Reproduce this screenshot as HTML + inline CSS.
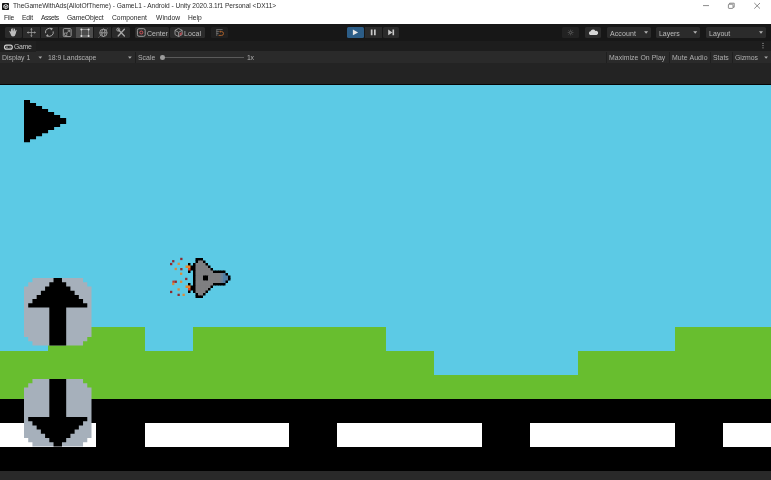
<!DOCTYPE html>
<html><head><meta charset="utf-8">
<style>
html,body{margin:0;padding:0;}
body{width:771px;height:480px;overflow:hidden;background:#000;position:relative;font-family:"Liberation Sans",sans-serif;}
.a{position:absolute;}
.t{position:absolute;white-space:nowrap;line-height:1;will-change:transform;}
.btn{position:absolute;background:#2d2d2d;border-radius:1.5px;}
svg{position:absolute;overflow:visible;}
</style></head><body>

<div class="a" style="left:0;top:0;width:771px;height:24px;background:#fff"></div>
<div class="a" style="left:0;top:24px;width:771px;height:17px;background:#171717"></div>
<div class="a" style="left:0;top:40.8px;width:771px;height:10.7px;background:#1d1d1d"></div>
<div class="a" style="left:0;top:51.4px;width:771px;height:12px;background:#2a2a2a"></div>
<div class="a" style="left:0;top:63.2px;width:771px;height:21.5px;background:#232323"></div>
<div class="a" style="left:0;top:83.7px;width:771px;height:1.2px;background:#050505"></div>
<div class="a" style="left:0;top:84.8px;width:771px;height:320px;background:#5ccae5"></div>
<div class="a" style="left:0.00px;top:350.68px;width:48.49px;height:48.69px;background:#68be2f"></div>
<div class="a" style="left:48.19px;top:326.59px;width:96.67px;height:72.78px;background:#68be2f"></div>
<div class="a" style="left:144.56px;top:350.68px;width:48.49px;height:48.69px;background:#68be2f"></div>
<div class="a" style="left:192.75px;top:326.59px;width:193.05px;height:72.78px;background:#68be2f"></div>
<div class="a" style="left:385.50px;top:350.68px;width:48.49px;height:48.69px;background:#68be2f"></div>
<div class="a" style="left:433.69px;top:374.77px;width:144.86px;height:24.59px;background:#68be2f"></div>
<div class="a" style="left:578.25px;top:350.68px;width:96.67px;height:48.69px;background:#68be2f"></div>
<div class="a" style="left:674.62px;top:326.59px;width:96.67px;height:72.78px;background:#68be2f"></div>
<div class="a" style="left:0;top:398.87px;width:771px;height:72.28px;background:#000"></div>
<div class="a" style="left:-48.19px;top:422.96px;width:144.56px;height:24.09px;background:#fff"></div>
<div class="a" style="left:144.56px;top:422.96px;width:144.56px;height:24.09px;background:#fff"></div>
<div class="a" style="left:337.31px;top:422.96px;width:144.56px;height:24.09px;background:#fff"></div>
<div class="a" style="left:530.06px;top:422.96px;width:144.56px;height:24.09px;background:#fff"></div>
<div class="a" style="left:722.81px;top:422.96px;width:144.56px;height:24.09px;background:#fff"></div>
<div class="a" style="left:0;top:470.9px;width:771px;height:9.3px;background:#292929"></div>
<svg style="left:24.09px;top:100px" width="50" height="50"><polygon fill="#000" points="0.00,0.00 6.02,0.00 6.02,3.01 12.05,3.01 12.05,6.02 18.07,6.02 18.07,9.04 24.09,9.04 24.09,12.05 30.12,12.05 30.12,15.06 36.14,15.06 36.14,18.07 42.16,18.07 42.16,24.09 36.14,24.09 36.14,27.11 30.12,27.11 30.12,30.12 24.09,30.12 24.09,33.13 18.07,33.13 18.07,36.14 12.05,36.14 12.05,39.15 6.02,39.15 6.02,42.16 0.00,42.16"/></svg>
<svg style="left:24.10px;top:277.90px" width="68" height="68"><polygon fill="#a6b0bb" points="8.44,0.00 59.06,0.00 59.06,4.22 63.28,4.22 63.28,8.44 67.50,8.44 67.50,59.06 63.28,59.06 63.28,63.28 59.06,63.28 59.06,67.50 8.44,67.50 8.44,63.28 4.22,63.28 4.22,59.06 0.00,59.06 0.00,8.44 4.22,8.44 4.22,4.22 8.44,4.22"/><polygon fill="#000" points="29.53,0.00 37.97,0.00 37.97,4.22 42.19,4.22 42.19,8.44 46.41,8.44 46.41,12.66 50.62,12.66 50.62,16.88 54.84,16.88 54.84,21.09 59.06,21.09 59.06,25.31 63.28,25.31 63.28,29.53 42.19,29.53 42.19,67.50 25.31,67.50 25.31,29.53 4.22,29.53 4.22,25.31 8.44,25.31 8.44,21.09 12.66,21.09 12.66,16.88 16.88,16.88 16.88,12.66 21.09,12.66 21.09,8.44 25.31,8.44 25.31,4.22 29.53,4.22"/></svg>
<svg style="left:24.10px;top:379.00px" width="68" height="68"><polygon fill="#a6b0bb" points="8.44,0.00 59.06,0.00 59.06,4.22 63.28,4.22 63.28,8.44 67.50,8.44 67.50,59.06 63.28,59.06 63.28,63.28 59.06,63.28 59.06,67.50 8.44,67.50 8.44,63.28 4.22,63.28 4.22,59.06 0.00,59.06 0.00,8.44 4.22,8.44 4.22,4.22 8.44,4.22"/><polygon fill="#000" points="29.53,67.50 37.97,67.50 37.97,63.28 42.19,63.28 42.19,59.06 46.41,59.06 46.41,54.84 50.62,54.84 50.62,50.62 54.84,50.62 54.84,46.41 59.06,46.41 59.06,42.19 63.28,42.19 63.28,37.97 42.19,37.97 42.19,0.00 25.31,0.00 25.31,37.97 4.22,37.97 4.22,42.19 8.44,42.19 8.44,46.41 12.66,46.41 12.66,50.62 16.88,50.62 16.88,54.84 21.09,54.84 21.09,59.06 25.31,59.06 25.31,63.28 29.53,63.28"/></svg>
<svg style="left:0;top:0" width="771" height="480"><rect x="195.50" y="258.00" width="3.00" height="3.00" fill="#000"/><rect x="198.00" y="258.00" width="3.00" height="3.00" fill="#000"/><rect x="200.50" y="258.00" width="2.50" height="3.00" fill="#000"/><rect x="195.50" y="260.50" width="3.00" height="3.00" fill="#000"/><rect x="198.00" y="260.50" width="3.00" height="3.00" fill="#7f7f81"/><rect x="200.50" y="260.50" width="3.00" height="3.00" fill="#7f7f81"/><rect x="203.00" y="260.50" width="2.50" height="3.00" fill="#000"/><rect x="188.00" y="263.00" width="2.50" height="3.00" fill="#000"/><rect x="193.00" y="263.00" width="3.00" height="3.00" fill="#000"/><rect x="195.50" y="263.00" width="3.00" height="3.00" fill="#7f7f81"/><rect x="198.00" y="263.00" width="3.00" height="3.00" fill="#7f7f81"/><rect x="200.50" y="263.00" width="3.00" height="3.00" fill="#7f7f81"/><rect x="203.00" y="263.00" width="3.00" height="3.00" fill="#7f7f81"/><rect x="205.50" y="263.00" width="2.50" height="3.00" fill="#000"/><rect x="185.50" y="265.50" width="3.00" height="2.50" fill="#e8862a"/><rect x="188.00" y="265.50" width="3.00" height="3.00" fill="#e8862a"/><rect x="190.50" y="265.50" width="3.00" height="3.00" fill="#000"/><rect x="193.00" y="265.50" width="3.00" height="3.00" fill="#000"/><rect x="195.50" y="265.50" width="3.00" height="3.00" fill="#7f7f81"/><rect x="198.00" y="265.50" width="3.00" height="3.00" fill="#7f7f81"/><rect x="200.50" y="265.50" width="3.00" height="3.00" fill="#7f7f81"/><rect x="203.00" y="265.50" width="3.00" height="3.00" fill="#7f7f81"/><rect x="205.50" y="265.50" width="3.00" height="3.00" fill="#7f7f81"/><rect x="208.00" y="265.50" width="2.50" height="3.00" fill="#000"/><rect x="188.00" y="268.00" width="3.00" height="3.00" fill="#d8452a"/><rect x="190.50" y="268.00" width="3.00" height="2.50" fill="#000"/><rect x="193.00" y="268.00" width="3.00" height="3.00" fill="#000"/><rect x="195.50" y="268.00" width="3.00" height="3.00" fill="#7f7f81"/><rect x="198.00" y="268.00" width="3.00" height="3.00" fill="#7f7f81"/><rect x="200.50" y="268.00" width="3.00" height="3.00" fill="#7f7f81"/><rect x="203.00" y="268.00" width="3.00" height="3.00" fill="#7f7f81"/><rect x="205.50" y="268.00" width="3.00" height="3.00" fill="#7f7f81"/><rect x="208.00" y="268.00" width="3.00" height="3.00" fill="#7f7f81"/><rect x="210.50" y="268.00" width="2.50" height="3.00" fill="#000"/><rect x="188.00" y="270.50" width="2.50" height="2.50" fill="#000"/><rect x="193.00" y="270.50" width="3.00" height="3.00" fill="#000"/><rect x="195.50" y="270.50" width="3.00" height="3.00" fill="#7f7f81"/><rect x="198.00" y="270.50" width="3.00" height="3.00" fill="#7f7f81"/><rect x="200.50" y="270.50" width="3.00" height="3.00" fill="#7f7f81"/><rect x="203.00" y="270.50" width="3.00" height="3.00" fill="#7f7f81"/><rect x="205.50" y="270.50" width="3.00" height="3.00" fill="#7f7f81"/><rect x="208.00" y="270.50" width="3.00" height="3.00" fill="#7f7f81"/><rect x="210.50" y="270.50" width="3.00" height="3.00" fill="#7f7f81"/><rect x="213.00" y="270.50" width="3.00" height="3.00" fill="#000"/><rect x="215.50" y="270.50" width="3.00" height="3.00" fill="#000"/><rect x="218.00" y="270.50" width="3.00" height="3.00" fill="#000"/><rect x="220.50" y="270.50" width="3.00" height="3.00" fill="#000"/><rect x="223.00" y="270.50" width="2.50" height="3.00" fill="#000"/><rect x="193.00" y="273.00" width="3.00" height="3.00" fill="#000"/><rect x="195.50" y="273.00" width="3.00" height="3.00" fill="#7f7f81"/><rect x="198.00" y="273.00" width="3.00" height="3.00" fill="#7f7f81"/><rect x="200.50" y="273.00" width="3.00" height="3.00" fill="#7f7f81"/><rect x="203.00" y="273.00" width="3.00" height="3.00" fill="#7f7f81"/><rect x="205.50" y="273.00" width="3.00" height="3.00" fill="#7f7f81"/><rect x="208.00" y="273.00" width="3.00" height="3.00" fill="#7f7f81"/><rect x="210.50" y="273.00" width="3.00" height="3.00" fill="#7f7f81"/><rect x="213.00" y="273.00" width="3.00" height="3.00" fill="#7f7f81"/><rect x="215.50" y="273.00" width="3.00" height="3.00" fill="#7f7f81"/><rect x="218.00" y="273.00" width="3.00" height="3.00" fill="#7f7f81"/><rect x="220.50" y="273.00" width="3.00" height="3.00" fill="#6a8196"/><rect x="223.00" y="273.00" width="3.00" height="3.00" fill="#4f7da3"/><rect x="225.50" y="273.00" width="2.50" height="3.00" fill="#000"/><rect x="193.00" y="275.50" width="3.00" height="3.00" fill="#000"/><rect x="195.50" y="275.50" width="3.00" height="3.00" fill="#7f7f81"/><rect x="198.00" y="275.50" width="3.00" height="3.00" fill="#7f7f81"/><rect x="200.50" y="275.50" width="3.00" height="3.00" fill="#7f7f81"/><rect x="203.00" y="275.50" width="3.00" height="3.00" fill="#000"/><rect x="205.50" y="275.50" width="3.00" height="3.00" fill="#000"/><rect x="208.00" y="275.50" width="3.00" height="3.00" fill="#7f7f81"/><rect x="210.50" y="275.50" width="3.00" height="3.00" fill="#7f7f81"/><rect x="213.00" y="275.50" width="3.00" height="3.00" fill="#7f7f81"/><rect x="215.50" y="275.50" width="3.00" height="3.00" fill="#7f7f81"/><rect x="218.00" y="275.50" width="3.00" height="3.00" fill="#7f7f81"/><rect x="220.50" y="275.50" width="3.00" height="3.00" fill="#6a8196"/><rect x="223.00" y="275.50" width="3.00" height="3.00" fill="#4f7da3"/><rect x="225.50" y="275.50" width="3.00" height="3.00" fill="#4f7da3"/><rect x="228.00" y="275.50" width="2.50" height="3.00" fill="#000"/><rect x="193.00" y="278.00" width="3.00" height="3.00" fill="#000"/><rect x="195.50" y="278.00" width="3.00" height="3.00" fill="#7f7f81"/><rect x="198.00" y="278.00" width="3.00" height="3.00" fill="#7f7f81"/><rect x="200.50" y="278.00" width="3.00" height="3.00" fill="#7f7f81"/><rect x="203.00" y="278.00" width="3.00" height="3.00" fill="#000"/><rect x="205.50" y="278.00" width="3.00" height="3.00" fill="#000"/><rect x="208.00" y="278.00" width="3.00" height="3.00" fill="#7f7f81"/><rect x="210.50" y="278.00" width="3.00" height="3.00" fill="#7f7f81"/><rect x="213.00" y="278.00" width="3.00" height="3.00" fill="#7f7f81"/><rect x="215.50" y="278.00" width="3.00" height="3.00" fill="#7f7f81"/><rect x="218.00" y="278.00" width="3.00" height="3.00" fill="#7f7f81"/><rect x="220.50" y="278.00" width="3.00" height="3.00" fill="#6a8196"/><rect x="223.00" y="278.00" width="3.00" height="3.00" fill="#4f7da3"/><rect x="225.50" y="278.00" width="3.00" height="3.00" fill="#4f7da3"/><rect x="228.00" y="278.00" width="2.50" height="2.50" fill="#000"/><rect x="193.00" y="280.50" width="3.00" height="3.00" fill="#000"/><rect x="195.50" y="280.50" width="3.00" height="3.00" fill="#7f7f81"/><rect x="198.00" y="280.50" width="3.00" height="3.00" fill="#7f7f81"/><rect x="200.50" y="280.50" width="3.00" height="3.00" fill="#7f7f81"/><rect x="203.00" y="280.50" width="3.00" height="3.00" fill="#7f7f81"/><rect x="205.50" y="280.50" width="3.00" height="3.00" fill="#7f7f81"/><rect x="208.00" y="280.50" width="3.00" height="3.00" fill="#7f7f81"/><rect x="210.50" y="280.50" width="3.00" height="3.00" fill="#7f7f81"/><rect x="213.00" y="280.50" width="3.00" height="3.00" fill="#7f7f81"/><rect x="215.50" y="280.50" width="3.00" height="3.00" fill="#7f7f81"/><rect x="218.00" y="280.50" width="3.00" height="3.00" fill="#7f7f81"/><rect x="220.50" y="280.50" width="3.00" height="3.00" fill="#6a8196"/><rect x="223.00" y="280.50" width="3.00" height="3.00" fill="#4f7da3"/><rect x="225.50" y="280.50" width="2.50" height="2.50" fill="#000"/><rect x="188.00" y="283.00" width="2.50" height="3.00" fill="#000"/><rect x="193.00" y="283.00" width="3.00" height="3.00" fill="#000"/><rect x="195.50" y="283.00" width="3.00" height="3.00" fill="#7f7f81"/><rect x="198.00" y="283.00" width="3.00" height="3.00" fill="#7f7f81"/><rect x="200.50" y="283.00" width="3.00" height="3.00" fill="#7f7f81"/><rect x="203.00" y="283.00" width="3.00" height="3.00" fill="#7f7f81"/><rect x="205.50" y="283.00" width="3.00" height="3.00" fill="#7f7f81"/><rect x="208.00" y="283.00" width="3.00" height="3.00" fill="#7f7f81"/><rect x="210.50" y="283.00" width="3.00" height="3.00" fill="#7f7f81"/><rect x="213.00" y="283.00" width="3.00" height="2.50" fill="#000"/><rect x="215.50" y="283.00" width="3.00" height="2.50" fill="#000"/><rect x="218.00" y="283.00" width="3.00" height="2.50" fill="#000"/><rect x="220.50" y="283.00" width="3.00" height="2.50" fill="#000"/><rect x="223.00" y="283.00" width="2.50" height="2.50" fill="#000"/><rect x="185.50" y="285.50" width="3.00" height="2.50" fill="#e8862a"/><rect x="188.00" y="285.50" width="3.00" height="3.00" fill="#e8862a"/><rect x="190.50" y="285.50" width="3.00" height="3.00" fill="#000"/><rect x="193.00" y="285.50" width="3.00" height="3.00" fill="#000"/><rect x="195.50" y="285.50" width="3.00" height="3.00" fill="#7f7f81"/><rect x="198.00" y="285.50" width="3.00" height="3.00" fill="#7f7f81"/><rect x="200.50" y="285.50" width="3.00" height="3.00" fill="#7f7f81"/><rect x="203.00" y="285.50" width="3.00" height="3.00" fill="#7f7f81"/><rect x="205.50" y="285.50" width="3.00" height="3.00" fill="#7f7f81"/><rect x="208.00" y="285.50" width="3.00" height="3.00" fill="#7f7f81"/><rect x="210.50" y="285.50" width="2.50" height="2.50" fill="#000"/><rect x="188.00" y="288.00" width="3.00" height="3.00" fill="#d8452a"/><rect x="190.50" y="288.00" width="3.00" height="2.50" fill="#000"/><rect x="193.00" y="288.00" width="3.00" height="3.00" fill="#000"/><rect x="195.50" y="288.00" width="3.00" height="3.00" fill="#7f7f81"/><rect x="198.00" y="288.00" width="3.00" height="3.00" fill="#7f7f81"/><rect x="200.50" y="288.00" width="3.00" height="3.00" fill="#7f7f81"/><rect x="203.00" y="288.00" width="3.00" height="3.00" fill="#7f7f81"/><rect x="205.50" y="288.00" width="3.00" height="3.00" fill="#7f7f81"/><rect x="208.00" y="288.00" width="2.50" height="2.50" fill="#000"/><rect x="188.00" y="290.50" width="2.50" height="2.50" fill="#000"/><rect x="193.00" y="290.50" width="3.00" height="2.50" fill="#000"/><rect x="195.50" y="290.50" width="3.00" height="3.00" fill="#7f7f81"/><rect x="198.00" y="290.50" width="3.00" height="3.00" fill="#7f7f81"/><rect x="200.50" y="290.50" width="3.00" height="3.00" fill="#7f7f81"/><rect x="203.00" y="290.50" width="3.00" height="3.00" fill="#7f7f81"/><rect x="205.50" y="290.50" width="2.50" height="2.50" fill="#000"/><rect x="195.50" y="293.00" width="3.00" height="3.00" fill="#000"/><rect x="198.00" y="293.00" width="3.00" height="3.00" fill="#7f7f81"/><rect x="200.50" y="293.00" width="3.00" height="3.00" fill="#7f7f81"/><rect x="203.00" y="293.00" width="2.50" height="2.50" fill="#000"/><rect x="195.50" y="295.50" width="3.00" height="2.50" fill="#000"/><rect x="198.00" y="295.50" width="3.00" height="2.50" fill="#000"/><rect x="200.50" y="295.50" width="2.50" height="2.50" fill="#000"/><rect x="172.10" y="260.10" width="2.3" height="2.3" fill="#8e2b2f"/><rect x="180.20" y="257.80" width="2.3" height="2.3" fill="#8e2b2f"/><rect x="170.00" y="262.90" width="2.3" height="2.3" fill="#8e2b2f"/><rect x="177.60" y="262.70" width="2.3" height="2.3" fill="#d98a3c"/><rect x="174.60" y="267.80" width="2.3" height="2.3" fill="#d98a3c"/><rect x="180.20" y="268.00" width="2.3" height="2.3" fill="#8e2b2f"/><rect x="180.00" y="272.60" width="2.3" height="2.3" fill="#d98a3c"/><rect x="185.10" y="277.80" width="2.3" height="2.3" fill="#8e2b2f"/><rect x="172.40" y="280.60" width="2.3" height="2.3" fill="#c4372c"/><rect x="174.60" y="280.60" width="2.3" height="2.3" fill="#8e2b2f"/><rect x="172.10" y="282.80" width="2.3" height="2.3" fill="#d98a3c"/><rect x="180.00" y="280.60" width="2.3" height="2.3" fill="#d98a3c"/><rect x="177.50" y="288.30" width="2.3" height="2.3" fill="#d98a3c"/><rect x="170.00" y="290.80" width="2.3" height="2.3" fill="#8e2b2f"/><rect x="177.50" y="293.70" width="2.3" height="2.3" fill="#8e2b2f"/><rect x="182.50" y="293.70" width="2.3" height="2.3" fill="#d98a3c"/></svg>
<div class="a" style="left:2.3px;top:3px;width:7px;height:6.8px;background:#111;border-radius:0.8px"></div>
<svg style="left:0;top:0" width="771" height="480"><path d="M5.8 4.4 L7.9 5.5 L7.9 7.6 L5.8 8.7 L3.8 7.6 L3.8 5.5 Z M5.8 6.5 L5.8 8.6 M5.8 6.5 L3.9 5.5 M5.8 6.5 L7.8 5.5" fill="none" stroke="#fff" stroke-width="0.8"/></svg>
<div class="t" style="left:13.20px;top:3.47px;font-size:6.60px;color:#2e2e2e;letter-spacing:-0.025px;">TheGameWithAds(AllotOfTheme) - GameL1 - Android - Unity 2020.3.1f1 Personal &lt;DX11&gt;</div>
<div class="t" style="left:3.90px;top:15.42px;font-size:6.70px;color:#262626;letter-spacing:-0.173px;">File</div>
<div class="t" style="left:21.80px;top:15.42px;font-size:6.70px;color:#262626;letter-spacing:-0.161px;">Edit</div>
<div class="t" style="left:41.20px;top:15.42px;font-size:6.70px;color:#262626;letter-spacing:-0.418px;">Assets</div>
<div class="t" style="left:67.30px;top:15.42px;font-size:6.70px;color:#262626;letter-spacing:-0.091px;">GameObject</div>
<div class="t" style="left:111.90px;top:15.42px;font-size:6.70px;color:#262626;letter-spacing:0.040px;">Component</div>
<div class="t" style="left:155.60px;top:15.42px;font-size:6.70px;color:#262626;letter-spacing:0.078px;">Window</div>
<div class="t" style="left:188.00px;top:15.42px;font-size:6.70px;color:#262626;letter-spacing:0.030px;">Help</div>
<svg style="left:0;top:0" width="771" height="480"><g stroke="#6e6e6e" stroke-width="0.8" fill="none"><path d="M703 5.6 H709"/><rect x="728.4" y="4.2" width="4.6" height="4.2" rx="0.6"/><path d="M729.6 4.2 V3.2 H734.2 V7.2 H733"/><path d="M754.3 3 L760 8.6 M760 3 L754.3 8.6"/></g></svg>
<div class="a" style="left:5.00px;top:27.00px;width:17.20px;height:10.70px;background:#2b2b2b;border-radius:1.5px"></div>
<div class="a" style="left:22.80px;top:27.00px;width:17.20px;height:10.70px;background:#2b2b2b;border-radius:0px"></div>
<div class="a" style="left:40.70px;top:27.00px;width:17.20px;height:10.70px;background:#2b2b2b;border-radius:0px"></div>
<div class="a" style="left:58.60px;top:27.00px;width:17.20px;height:10.70px;background:#2b2b2b;border-radius:0px"></div>
<div class="a" style="left:76.00px;top:27.00px;width:17.20px;height:10.70px;background:#4c4c4c;border-radius:0px"></div>
<div class="a" style="left:93.90px;top:27.00px;width:17.20px;height:10.70px;background:#2b2b2b;border-radius:0px"></div>
<div class="a" style="left:112.00px;top:27.00px;width:17.60px;height:10.70px;background:#2b2b2b;border-radius:1.5px"></div>
<svg style="left:0;top:0" width="771" height="480"><path d="M10.2 33.2 L9.2 31.2 L10 30.8 L11 32 L11 28.8 L11.9 28.8 L12 31.4 L12.4 28.2 L13.3 28.2 L13.5 31.4 L14.2 28.6 L15 28.8 L14.9 31.8 L15.9 29.8 L16.7 30.1 L15.8 33.6 Q15.4 36.4 13 36.5 Q11 36.4 10.2 33.2 Z" fill="#bdbdbd"/></svg>
<svg style="left:0;top:0" width="771" height="480"><g fill="#a8a8a8" stroke="#a8a8a8" stroke-width="0.7"><path d="M31.4 29.2 V35.8 M28.1 32.5 H34.7" fill="none"/><path d="M31.4 27.9 L32.6 29.6 H30.2 Z M31.4 37.1 L32.6 35.4 H30.2 Z M26.8 32.5 L28.5 31.3 V33.7 Z M36 32.5 L34.3 31.3 V33.7 Z" stroke="none"/></g></svg>
<svg style="left:0;top:0" width="771" height="480"><g fill="none" stroke="#a8a8a8" stroke-width="1"><path d="M45.6 33.2 A3.9 3.9 0 0 1 51.6 29"/><path d="M53.2 31.4 A3.9 3.9 0 0 1 47.2 35.6"/></g><path d="M50.4 27.6 L53 28.6 L51 30.6 Z M48.4 37 L45.8 36 L47.8 34 Z" fill="#a8a8a8"/></svg>
<svg style="left:0;top:0" width="771" height="480"><g fill="none" stroke="#a8a8a8" stroke-width="0.9"><rect x="63.3" y="28.6" width="7.8" height="8" rx="1"/><rect x="64.7" y="33" width="2.2" height="2.4" stroke-width="0.7"/><path d="M66.5 33.2 L69.4 30.4 M67.6 30.2 H69.6 V32.2" stroke-width="0.8"/></g></svg>
<svg style="left:0;top:0" width="771" height="480"><g fill="none" stroke="#9a9a9a" stroke-width="0.8"><rect x="81.4" y="29.4" width="7.2" height="6.6"/></g><g fill="#e0e0e0"><circle cx="81.4" cy="29.4" r="1"/><circle cx="88.6" cy="29.4" r="1"/><circle cx="81.4" cy="36" r="1"/><circle cx="88.6" cy="36" r="1"/></g></svg>
<svg style="left:0;top:0" width="771" height="480"><g fill="none" stroke="#a8a8a8" stroke-width="0.8"><circle cx="103.4" cy="32.8" r="3.7"/><ellipse cx="103.4" cy="32.8" rx="1.6" ry="3.7"/><path d="M99.7 32.8 H107.1"/><path d="M98.6 37.4 L108 28.2" stroke-dasharray="1 0.8" stroke-width="0.7"/></g></svg>
<svg style="left:0;top:0" width="771" height="480"><g fill="none" stroke="#a8a8a8" stroke-width="1.3" stroke-linecap="round"><path d="M118.4 29.8 L124.4 36"/><path d="M124.4 29.2 L118.2 36"/></g><circle cx="118.2" cy="29.6" r="1.5" fill="none" stroke="#a8a8a8" stroke-width="0.9"/></svg>
<div class="a" style="left:135.40px;top:27.00px;width:33.80px;height:10.70px;background:#2b2b2b;border-radius:1.5px"></div>
<div class="a" style="left:170.20px;top:27.00px;width:35.00px;height:10.70px;background:#2b2b2b;border-radius:1.5px"></div>
<svg style="left:0;top:0" width="771" height="480"><rect x="137.4" y="28.7" width="7.8" height="7.6" rx="1.6" fill="none" stroke="#a8a8a8" stroke-width="0.9"/><circle cx="141.3" cy="32.5" r="1.5" fill="none" stroke="#d4525a" stroke-width="1"/></svg>
<div class="t" style="left:146.80px;top:29.66px;font-size:7.00px;color:#bcbcbc;letter-spacing:-0.019px;">Center</div>
<svg style="left:0;top:0" width="771" height="480"><g fill="none" stroke="#a8a8a8" stroke-width="0.8"><path d="M178.6 28.4 L182.2 30.3 V34.6 L178.6 36.6 L175 34.6 V30.3 Z"/><path d="M175 30.3 L178.6 32.3 L182.2 30.3 M178.6 32.3 V36.6"/></g><path d="M179.6 33.2 L181.8 32 V34.6 L179.6 35.8 Z" fill="#b04a52"/></svg>
<div class="t" style="left:183.80px;top:29.66px;font-size:7.00px;color:#bcbcbc;letter-spacing:0.093px;">Local</div>
<div class="a" style="left:210.80px;top:27.00px;width:17.20px;height:10.70px;background:#202020;border-radius:1.5px"></div>
<svg style="left:0;top:0" width="771" height="480"><g fill="none" stroke="#777" stroke-width="0.8"><path d="M216.4 29.6 H222.6 M216.4 31.6 H219 M216.4 33.6 H218.6 M216.8 29.6 V36"/></g><path d="M218.6 35.4 H221.6 A1.9 1.9 0 0 0 221.6 31.6 H220.2" fill="none" stroke="#b8672b" stroke-width="0.9"/><path d="M220.6 30.4 L219.2 31.6 L220.6 32.8 Z" fill="#b8672b"/></svg>
<div class="a" style="left:347.00px;top:27.00px;width:17.10px;height:10.70px;background:#2c5d87;border-radius:1.5px"></div>
<div class="a" style="left:365.00px;top:27.00px;width:16.80px;height:10.70px;background:#2b2b2b;border-radius:0px"></div>
<div class="a" style="left:382.60px;top:27.00px;width:16.80px;height:10.70px;background:#2b2b2b;border-radius:1.5px"></div>
<svg style="left:0;top:0" width="771" height="480"><path d="M352.9 29.6 L358.1 32.4 L352.9 35.3 Z" fill="#e8e8e8"/><path d="M370.8 29.6 h1.7 v5.6 h-1.7 Z M374 29.6 h1.7 v5.6 h-1.7 Z" fill="#c8c8c8"/><path d="M388.2 29.6 L392.4 32.4 L388.2 35.3 Z M392.5 29.6 h1.6 v5.7 h-1.6 Z" fill="#c8c8c8"/></svg>
<div class="a" style="left:562.00px;top:27.00px;width:17.40px;height:10.70px;background:#222;border-radius:1.5px"></div>
<div class="a" style="left:585.40px;top:27.00px;width:15.80px;height:10.70px;background:#2b2b2b;border-radius:1.5px"></div>
<svg style="left:0;top:0" width="771" height="480"><g stroke="#5a5a5a" stroke-width="0.7"><path d="M570.6 29.6 V35.4 M567.7 32.5 H573.5 M568.5 30.4 L572.7 34.6 M572.7 30.4 L568.5 34.6"/></g><circle cx="570.6" cy="32.5" r="1" fill="#222" stroke="#5a5a5a" stroke-width="0.6"/></svg>
<svg style="left:0;top:0" width="771" height="480"><path d="M590.2 35 A1.9 1.9 0 0 1 590.6 31.3 A2.6 2.6 0 0 1 595.4 30.9 A2.1 2.1 0 0 1 596.6 35 Z" fill="#d6d6d6"/></svg>
<div class="a" style="left:607.20px;top:27.00px;width:43.40px;height:10.70px;background:#2b2b2b;border-radius:1.5px"></div>
<div class="t" style="left:610.40px;top:29.66px;font-size:7.00px;color:#bcbcbc;letter-spacing:0.101px;">Account</div>
<svg style="left:0;top:0" width="771" height="480"><path d="M644.1 31.2 h4 l-2 2.6 Z" fill="#b4b4b4"/></svg>
<div class="a" style="left:656.20px;top:27.00px;width:43.60px;height:10.70px;background:#2b2b2b;border-radius:1.5px"></div>
<div class="t" style="left:659.40px;top:29.66px;font-size:7.00px;color:#bcbcbc;letter-spacing:-0.052px;">Layers</div>
<svg style="left:0;top:0" width="771" height="480"><path d="M693.2 31.2 h4 l-2 2.6 Z" fill="#b4b4b4"/></svg>
<div class="a" style="left:705.80px;top:27.00px;width:60.00px;height:10.70px;background:#2b2b2b;border-radius:1.5px"></div>
<div class="t" style="left:708.70px;top:29.66px;font-size:7.00px;color:#bcbcbc;letter-spacing:0.048px;">Layout</div>
<svg style="left:0;top:0" width="771" height="480"><path d="M759 31.2 h4 l-2 2.6 Z" fill="#b4b4b4"/></svg>
<div class="a" style="left:0;top:41px;width:36px;height:10.5px;background:#202020"></div>
<svg style="left:0;top:0" width="771" height="480"><rect x="4.5" y="45.2" width="7.8" height="3.9" rx="1.95" fill="none" stroke="#d2d2d2" stroke-width="1.2"/><path d="M6 47.15 h1.8 M9.6 47.15 h1" stroke="#d2d2d2" stroke-width="0.8"/></svg>
<div class="t" style="left:14.40px;top:43.91px;font-size:6.90px;color:#c0c0c0;letter-spacing:-0.297px;">Game</div>
<svg style="left:0;top:0" width="771" height="480"><g fill="#9a9a9a"><circle cx="763" cy="43.4" r="0.65"/><circle cx="763" cy="45.6" r="0.65"/><circle cx="763" cy="47.8" r="0.65"/></g></svg>
<div class="t" style="left:2.20px;top:54.71px;font-size:6.90px;color:#b0b0b0;letter-spacing:-0.009px;">Display 1</div>
<svg style="left:0;top:0" width="771" height="480"><path d="M38.4 56.4 h3.8 l-1.9 2.4 Z M128 56.4 h3.8 l-1.9 2.4 Z M764.2 56.4 h3.8 l-1.9 2.4 Z" fill="#a8a8a8"/></svg>
<div class="t" style="left:47.60px;top:54.71px;font-size:6.90px;color:#b0b0b0;letter-spacing:-0.051px;">18:9 Landscape</div>
<div class="a" style="left:135.2px;top:52px;width:0.8px;height:11px;background:#1e1e1e"></div>
<div class="t" style="left:138.20px;top:54.71px;font-size:6.90px;color:#b0b0b0;letter-spacing:0.007px;">Scale</div>
<div class="a" style="left:163px;top:57.1px;width:80.6px;height:0.9px;background:#5a5a5a"></div>
<div class="a" style="left:160px;top:55.3px;width:4.6px;height:4.6px;border-radius:50%;background:#9c9c9c"></div>
<div class="t" style="left:247.30px;top:54.71px;font-size:6.90px;color:#b0b0b0;letter-spacing:-0.393px;">1x</div>
<div class="a" style="left:606.4px;top:52px;width:0.8px;height:11px;background:#1f1f1f"></div>
<div class="a" style="left:668.6px;top:52px;width:0.8px;height:11px;background:#1f1f1f"></div>
<div class="a" style="left:710.4px;top:52px;width:0.8px;height:11px;background:#1f1f1f"></div>
<div class="a" style="left:731.8px;top:52px;width:0.8px;height:11px;background:#1f1f1f"></div>
<div class="t" style="left:609.20px;top:54.71px;font-size:6.90px;color:#b0b0b0;letter-spacing:0.050px;">Maximize On Play</div>
<div class="t" style="left:671.70px;top:54.71px;font-size:6.90px;color:#b0b0b0;letter-spacing:0.118px;">Mute Audio</div>
<div class="t" style="left:713.20px;top:54.71px;font-size:6.90px;color:#b0b0b0;letter-spacing:0.015px;">Stats</div>
<div class="t" style="left:735.00px;top:54.71px;font-size:6.90px;color:#b0b0b0;letter-spacing:-0.097px;">Gizmos</div>
</body></html>
